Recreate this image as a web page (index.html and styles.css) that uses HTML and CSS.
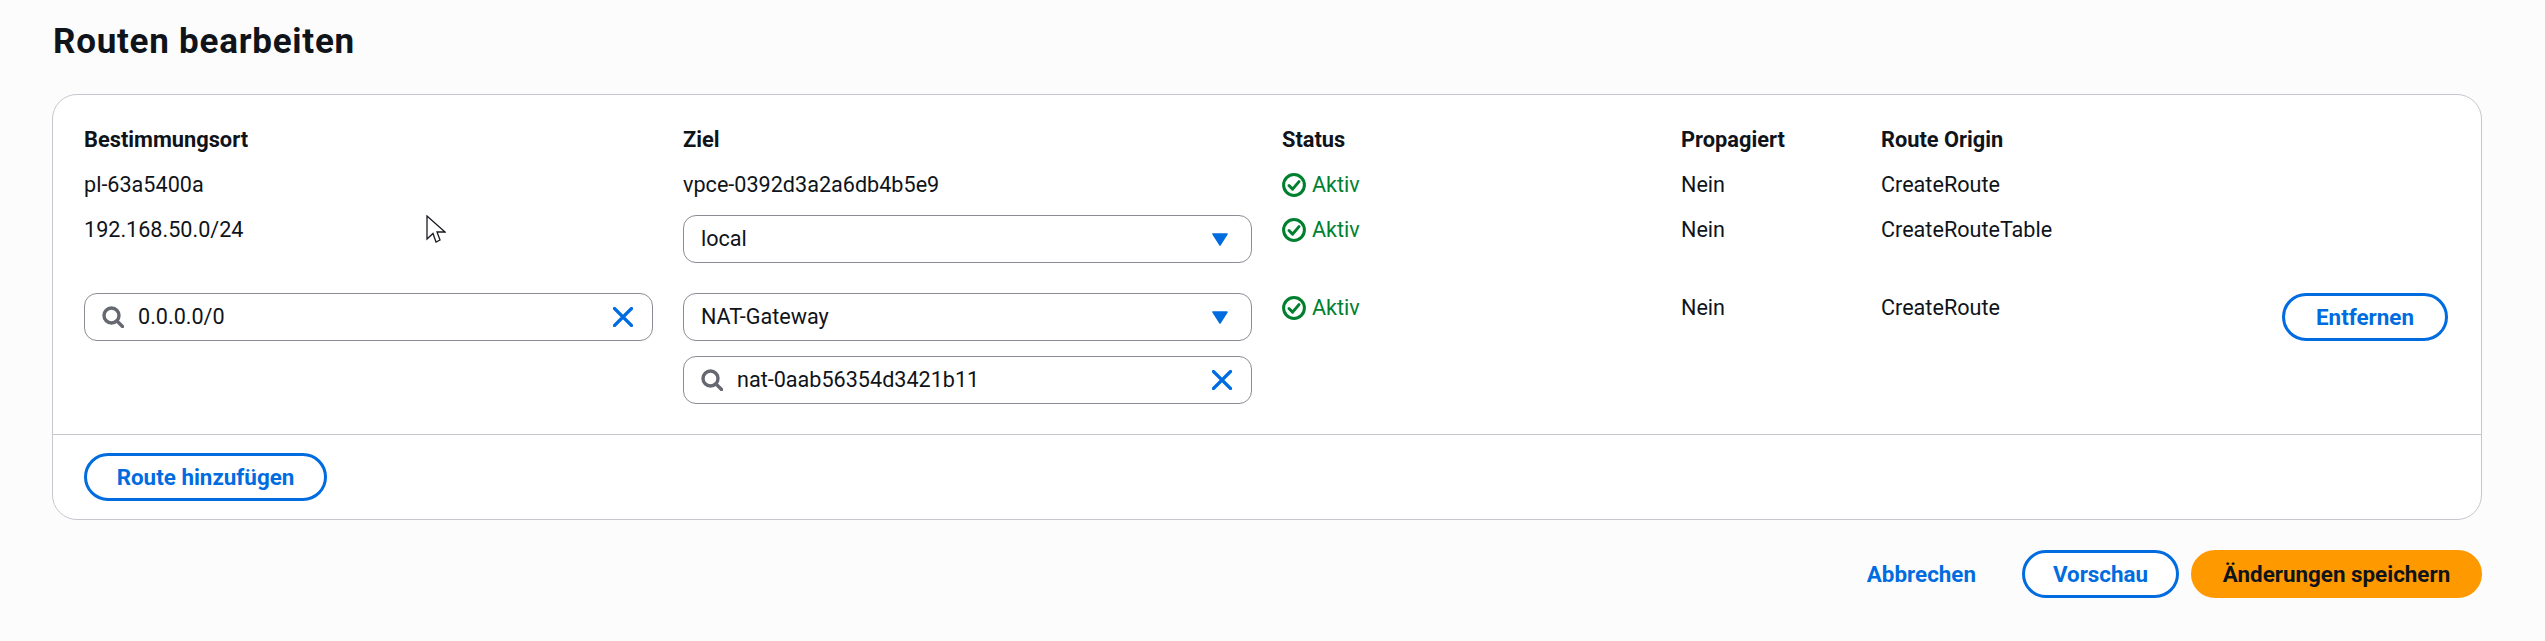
FILE: index.html
```html
<!DOCTYPE html>
<html lang="de">
<head>
<meta charset="utf-8">
<title>Routen bearbeiten</title>
<link rel="stylesheet" href="styles.css">
</head>
<body>
<main class="page">
  <h1 class="title">Routen bearbeiten</h1>
  <section class="card">
    <div class="table">
      <div class="row head">
        <div>Bestimmungsort</div><div>Ziel</div><div>Status</div><div>Propagiert</div><div>Route Origin</div>
      </div>
      <div class="row">
        <div>pl-63a5400a</div>
        <div>vpce-0392d3a2a6db4b5e9</div>
        <div class="status"><svg class="ok" viewBox="0 0 24 24"><circle cx="12" cy="12" r="10.4"/><path d="M7 12.5l3.6 3.6L17 8.6"/></svg>Aktiv</div>
        <div>Nein</div>
        <div>CreateRoute</div>
      </div>
      <div class="row spaced">
        <div>192.168.50.0/24</div>
        <div class="field select"><span class="value">local</span><svg class="caret" viewBox="0 0 16 13"><path d="M1 1h14L8 12z"/></svg></div>
        <div class="status"><svg class="ok" viewBox="0 0 24 24"><circle cx="12" cy="12" r="10.4"/><path d="M7 12.5l3.6 3.6L17 8.6"/></svg>Aktiv</div>
        <div>Nein</div>
        <div>CreateRouteTable</div>
      </div>
      <div class="row">
        <div class="field search">
          <svg class="lens" viewBox="0 0 22 22"><circle cx="9.5" cy="9.5" r="7.5"/><path d="M15 15l5.5 5.5"/></svg>
          <span class="value">0.0.0.0/0</span>
          <svg class="clear" viewBox="0 0 20 20"><path d="M1.5 1.5l17 17M18.5 1.5l-17 17"/></svg>
        </div>
        <div class="stack">
          <div class="field select"><span class="value">NAT-Gateway</span><svg class="caret" viewBox="0 0 16 13"><path d="M1 1h14L8 12z"/></svg></div>
          <div class="field search">
            <svg class="lens" viewBox="0 0 22 22"><circle cx="9.5" cy="9.5" r="7.5"/><path d="M15 15l5.5 5.5"/></svg>
            <span class="value">nat-0aab56354d3421b11</span>
            <svg class="clear" viewBox="0 0 20 20"><path d="M1.5 1.5l17 17M18.5 1.5l-17 17"/></svg>
          </div>
        </div>
        <div class="status"><svg class="ok" viewBox="0 0 24 24"><circle cx="12" cy="12" r="10.4"/><path d="M7 12.5l3.6 3.6L17 8.6"/></svg>Aktiv</div>
        <div>Nein</div>
        <div class="origin"><span>CreateRoute</span><button class="btn remove">Entfernen</button></div>
      </div>
    </div>
    <div class="card-foot"><button class="btn add">Route hinzufügen</button></div>
  </section>
  <div class="actions">
    <button class="btn link">Abbrechen</button>
    <button class="btn preview">Vorschau</button>
    <button class="btn primary">Änderungen speichern</button>
  </div>
</main>
<svg class="cursor" viewBox="0 0 20 29"><path d="M1 1v23l6-5.500 3 8.500 4-2-3-8h8z"/></svg>
</body>
</html>
```
FILE: styles.css
```css
* { box-sizing: border-box; }
html, body { margin: 0; }
body {
  background: #fcfcfd;
  color: #0f141a;
  font-family: Roboto, "Noto Sans", sans-serif;
  font-size: 21.6px;
  line-height: 30px;
  height: 641px;
  overflow: hidden;
}
.page { padding: 22px 63px 0 52px; }
.title { margin: 0 0 32px 1px; font-size: 35px; line-height: 40px; font-weight: 700; letter-spacing: 0.75px; }
.card { background: #fff; border: 1px solid #c6c6cd; border-radius: 25px; }
.table { padding: 30px 33px 30px 31px; display: flex; flex-direction: column; gap: 15px; }
.row { display: grid; grid-template-columns: 569px 569px 369px 170px 1fr; column-gap: 30px; align-items: start; }
.head { font-weight: 700; font-size: 21.8px; }
.spaced { margin-bottom: 15px; }
.status { color: #00802f; display: flex; align-items: center; gap: 6px; }
.ok { width: 24px; height: 24px; fill: none; stroke: #00802f; stroke-width: 3; stroke-linecap: round; stroke-linejoin: round; }
.field { height: 48px; border: 1px solid #8c8c94; border-radius: 13px; background: #fff; display: flex; align-items: center; padding: 0 19px 0 17px; }
.select { padding-right: 23px; }
.value { flex: 1; }
.search .value { margin-left: 14px; }
.stack { display: flex; flex-direction: column; gap: 15px; }
.caret { width: 16px; height: 13px; fill: #006ce0; stroke: #006ce0; stroke-width: 1.5; stroke-linejoin: round; }
.lens { width: 22px; height: 22px; fill: none; stroke: #656871; stroke-width: 3.4; stroke-linecap: round; }
.clear { width: 20px; height: 20px; fill: none; stroke: #006ce0; stroke-width: 3.2; stroke-linecap: round; }
.origin { display: flex; justify-content: space-between; align-items: flex-start; }
.btn { font: inherit; font-size: 22.4px; font-weight: 700; height: 48px; border-radius: 24px; border: 3px solid #006ce0; background: #fff; color: #006ce0; padding: 0 30px; }
.remove { width: 166px; padding: 0; }
.card-foot { border-top: 1px solid #c6c6cd; padding: 18px 31px; }
.add { width: 243px; padding: 0; }
.actions { display: flex; justify-content: flex-end; align-items: center; margin-top: 30px; }
.link { background: none; border-color: transparent; padding: 0; margin-right: 43px; }
.preview { width: 157px; padding: 0; margin-right: 12px; }
.primary { width: 291px; padding: 0; background: #ff9900; border-color: #ff9900; color: #0f141a; }
.cursor { position: absolute; left: 426px; top: 215px; width: 20px; height: 29px; fill: #fff; stroke: #1a1a22; stroke-width: 1.300; }
```
